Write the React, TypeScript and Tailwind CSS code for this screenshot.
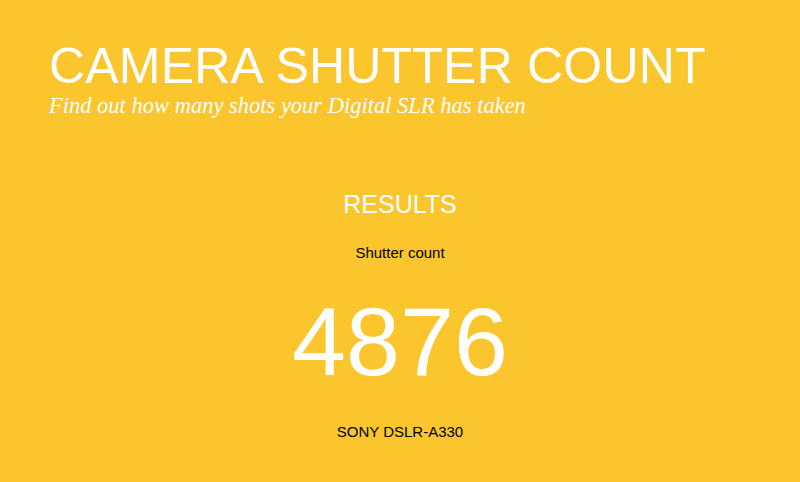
export default function App() {
  return (
    <div className="w-[800px] h-[482px] bg-[#fbc52d] overflow-hidden font-['Liberation_Sans',Arial,sans-serif]">
      {/* Header */}
      <div className="pl-[49px] pt-[39px]">
        <h1 className="text-[50px] leading-[55px] text-white tracking-[0.2px]">CAMERA SHUTTER COUNT</h1>
        <p className="text-white italic text-[22.5px] leading-[24px] font-['Liberation_Serif',Georgia,serif]">
          Find out how many shots your Digital SLR has taken
        </p>
      </div>

      {/* Results */}
      <div className="flex flex-col items-center mt-[72px]">
        <h2 className="text-[25px] leading-[28px] text-white">RESULTS</h2>
        <p className="text-[15px] leading-[16px] text-black mt-[27px]">Shutter count</p>
        <div className="text-[97px] leading-[110px] text-white mt-[26px]">4876</div>
        <p className="text-[15px] leading-[16px] text-black mt-[27px]">SONY DSLR-A330</p>
      </div>
    </div>
  )
}
